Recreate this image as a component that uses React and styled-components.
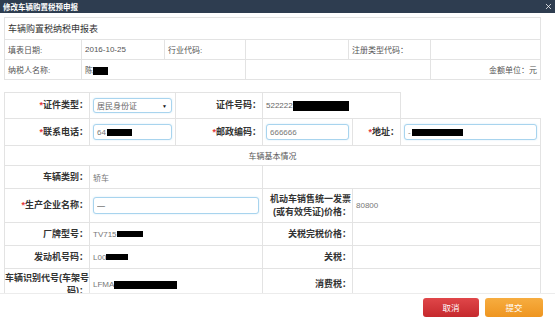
import React from 'react';
import styled, { createGlobalStyle } from 'styled-components';
import { X } from 'lucide-react';

const GlobalStyle = createGlobalStyle`
  * { box-sizing: border-box; }
  html, body { margin: 0; padding: 0; width: 100%; height: 100%; overflow: hidden; }
  body {
    font-family: "Liberation Sans", "Noto Sans CJK SC", sans-serif;
    background: #fff;
    color: #333;
  }
  #root { height: 100%; }
`;

const Dialog = styled.div`
  width: 555px;
  height: 320px;
  display: flex;
  flex-direction: column;
  background: #fff;
`;

const TitleBar = styled.div`
  height: 13px;
  flex: none;
  background: #2e3d50;
  color: #fff;
  display: flex;
  align-items: center;
  justify-content: space-between;
  padding: 0 2px 0 3px;
  font-size: 7.5px;
  font-weight: bold;
`;

const Body = styled.div`
  flex: 1;
  overflow-y: scroll;
  padding: 4px 8px 20px 4px;

  &::-webkit-scrollbar { width: 7px; }
  &::-webkit-scrollbar-track { background: #f1f1f1; }
  &::-webkit-scrollbar-thumb { background: #bdbdbd; }
  &::-webkit-scrollbar-button:vertical:start:decrement,
  &::-webkit-scrollbar-button:vertical:end:increment {
    display: block;
    height: 9px;
    background: #f1f1f1;
  }
`;

const Sheet = styled.table`
  width: 536px;
  border-collapse: collapse;
  table-layout: fixed;
  margin-bottom: ${p => p.$gap || 0}px;
`;

const Row = styled.tr`
  height: ${p => p.$h}px;
`;

const Cell = styled.td`
  border: 1px solid #e3e3e3;
  padding: 0 3px;
  font-size: ${p => p.$size || 8}px;
  color: ${p => p.$color || '#555'};
  text-align: ${p => p.$align || 'left'};
  vertical-align: middle;
  white-space: nowrap;
  overflow: hidden;
`;

const Label = styled.td`
  border: 1px solid #e3e3e3;
  padding: 0 1px 0 0;
  font-size: 9px;
  line-height: 13px;
  font-weight: bold;
  color: #333;
  text-align: right;
  vertical-align: middle;
  white-space: nowrap;
`;

const Star = styled.span`
  color: #e4393c;
`;

const Redact = styled.span`
  display: inline-block;
  width: ${p => p.$w}px;
  height: ${p => p.$h || 8}px;
  background: #000;
  vertical-align: middle;
  margin-left: ${p => p.$ml || 0}px;
`;

const Field = styled.div`
  height: ${p => p.$h || 16}px;
  border: 1px solid #a8d4ee;
  border-radius: 3px;
  background: #fff;
  display: flex;
  align-items: center;
  padding: 0 3px;
  font-size: 8px;
  color: #777;
  box-shadow: 0 0 2px rgba(120, 190, 230, 0.35);
`;

const TextInput = styled.input`
  width: 100%;
  height: ${p => p.$h || 16}px;
  border: 1px solid #a8d4ee;
  border-radius: 3px;
  padding: 0 3px;
  font-family: inherit;
  font-size: 8px;
  color: ${p => p.$dark ? '#333' : '#777'};
  outline: none;
  box-shadow: 0 0 2px rgba(120, 190, 230, 0.35);
`;

const SelectBox = styled(Field)`
  position: relative;
  height: 15px;
  color: #666;
`;

const Caret = styled.span`
  position: absolute;
  right: 4px;
  top: 4px;
  font-size: 5px;
  color: #111;
`;

const Footer = styled.div`
  height: 27px;
  flex: none;
  border-top: 1px solid #ececec;
  display: flex;
  justify-content: flex-end;
  align-items: center;
  gap: 6px;
  padding-right: 12px;
`;

const Button = styled.button`
  width: ${p => p.$w}px;
  height: 19px;
  border: none;
  border-radius: 3px;
  color: #fff;
  font-family: inherit;
  font-size: 8.5px;
  background: ${p => p.$tone === 'red'
    ? 'linear-gradient(#e04649, #c5292d)'
    : 'linear-gradient(#f7ad40, #ee9520)'};
`;

const extraRows = [
  ['合格证编号：', '增值税：'],
  ['进口自产证明编号：', '完税凭证号码：'],
  ['申报计税价格：', '计税价格：'],
  ['税率：', '应纳税额：'],
  ['免(减)税条件：', '免(减)税额：'],
  ['实纳税额：', '滞纳金金额：'],
  ['应缴纳税款：', '已缴纳税款：'],
  ['经办人：', '经办日期：'],
  ['代理人名称：', '代理人地址：'],
  ['代理人电话：', '接收人：'],
  ['受理日期：', '受理税务机关：'],
  ['主管税务机关：', '申报方式：'],
  ['备注：', '附件：'],
  ['审核意见：', '审核人：'],
];

const App = () => (
  <Dialog>
    <GlobalStyle />
    <TitleBar>
      <span>修改车辆购置税预申报</span>
      <X size={9} strokeWidth={2} color="#fff" />
    </TitleBar>

    <Body>
      <Sheet $gap={12}>
        <colgroup>
          <col style={{ width: 77 }} />
          <col style={{ width: 83 }} />
          <col style={{ width: 81 }} />
          <col style={{ width: 103 }} />
          <col style={{ width: 82 }} />
          <col style={{ width: 110 }} />
        </colgroup>
        <tbody>
          <Row $h={22}>
            <Cell colSpan={6} $size={9} $color="#333">车辆购置税纳税申报表</Cell>
          </Row>
          <Row $h={20}>
            <Cell>填表日期:</Cell>
            <Cell>2016-10-25</Cell>
            <Cell>行业代码:</Cell>
            <Cell />
            <Cell>注册类型代码：</Cell>
            <Cell />
          </Row>
          <Row $h={20}>
            <Cell>纳税人名称:</Cell>
            <Cell colSpan={2}>陈<Redact $w={15} /></Cell>
            <Cell colSpan={2} />
            <Cell $align="right">金额单位：元</Cell>
          </Row>
        </tbody>
      </Sheet>

      <Sheet>
        <colgroup>
          <col style={{ width: 85 }} />
          <col style={{ width: 86 }} />
          <col style={{ width: 87 }} />
          <col style={{ width: 90 }} />
          <col style={{ width: 48 }} />
          <col style={{ width: 140 }} />
        </colgroup>
        <tbody>
          <Row $h={26}>
            <Label><Star>*</Star>证件类型：</Label>
            <Cell>
              <SelectBox>居民身份证<Caret>▼</Caret></SelectBox>
            </Cell>
            <Label>证件号码：</Label>
            <Cell colSpan={2} $color="#666">522222<Redact $w={56} $h={10} /></Cell>
          </Row>
          <Row $h={27}>
            <Label><Star>*</Star>联系电话：</Label>
            <Cell>
              <Field>64<Redact $w={25} $h={7} $ml={1} /></Field>
            </Cell>
            <Label><Star>*</Star>邮政编码：</Label>
            <Cell>
              <TextInput readOnly value="666666" />
            </Cell>
            <Label><Star>*</Star>地址：</Label>
            <Cell>
              <Field>-<Redact $w={51} $h={7} $ml={1} /></Field>
            </Cell>
          </Row>
          <Row $h={20}>
            <Cell colSpan={6} $align="center">车辆基本情况</Cell>
          </Row>
          <Row $h={23}>
            <Label>车辆类别：</Label>
            <Cell colSpan={2} $color="#777">轿车</Cell>
            <Cell colSpan={3} />
          </Row>
          <Row $h={34}>
            <Label><Star>*</Star>生产企业名称：</Label>
            <Cell colSpan={2}>
              <TextInput readOnly value="—" $h={17} $dark />
            </Cell>
            <Label>机动车销售统一发票<br />(或有效凭证)价格：</Label>
            <Cell colSpan={2} $color="#777">80800</Cell>
          </Row>
          <Row $h={23}>
            <Label>厂牌型号：</Label>
            <Cell colSpan={2} $color="#777">TV715<Redact $w={26} $h={6} /></Cell>
            <Label>关税完税价格：</Label>
            <Cell colSpan={2} />
          </Row>
          <Row $h={23}>
            <Label>发动机号码：</Label>
            <Cell colSpan={2} $color="#777">L00<Redact $w={22} $h={6} /></Cell>
            <Label>关税：</Label>
            <Cell colSpan={2} />
          </Row>
          <Row $h={32}>
            <Label>车辆识别代号(车架号<br />码)：</Label>
            <Cell colSpan={2} $color="#777">LFMA<Redact $w={63} $h={8} /></Cell>
            <Label>消费税：</Label>
            <Cell colSpan={2} />
          </Row>
          {extraRows.map(([left, right], index) => (
            <Row $h={23} key={index}>
              <Label>{left}</Label>
              <Cell colSpan={2} />
              <Label>{right}</Label>
              <Cell colSpan={2} />
            </Row>
          ))}
        </tbody>
      </Sheet>
    </Body>

    <Footer>
      <Button $tone="red" $w={56}>取消</Button>
      <Button $tone="orange" $w={58}>提交</Button>
    </Footer>
  </Dialog>
);

export default App;
